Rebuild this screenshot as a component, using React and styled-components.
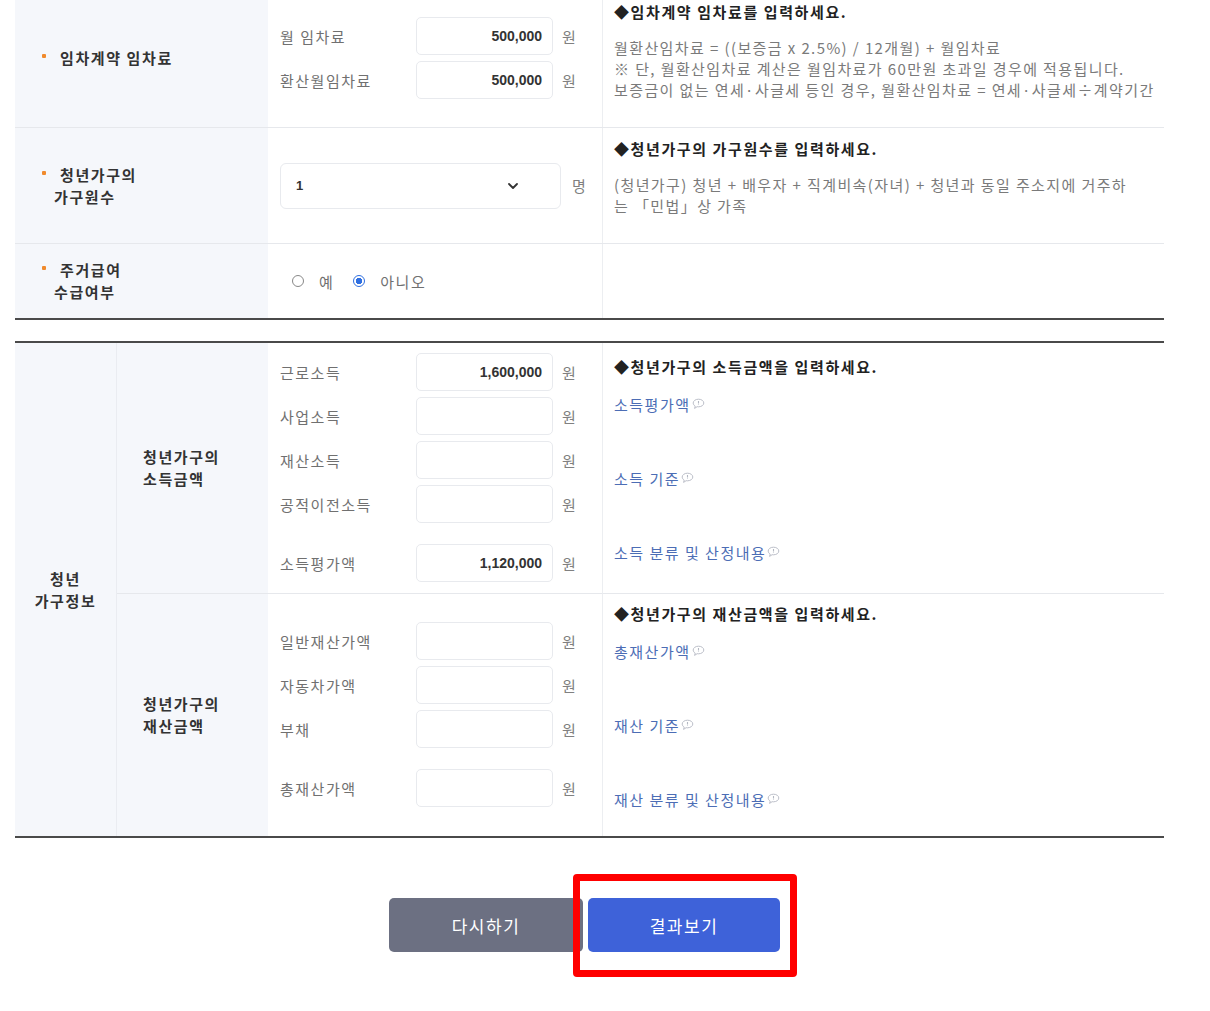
import React from 'react'
import styled, { createGlobalStyle } from 'styled-components';

const GlobalStyle = createGlobalStyle`
  body {
    margin: 0;
    background: #fff;
    font-family: "Noto Sans CJK KR", "Noto Sans", sans-serif;
    color: #333;
  }
`;

const HelpIcon = () => (
  <svg width="13" height="12" viewBox="0 0 13 12" style={{ marginLeft: 1 }}>
    <path d="M6.5 1.2c3 0 5.3 1.7 5.3 3.8S9.5 8.8 6.5 8.8c-.5 0-1 0-1.4-.1L2.6 10.4l.6-2.3C2 7.4 1.2 6.3 1.2 5c0-2.1 2.3-3.8 5.3-3.8z" fill="#fff" stroke="#b3b7c2" strokeWidth="0.9" />
    <path d="M6.5 3v2.4M6.5 6.2v.6" stroke="#b3b7c2" strokeWidth="1.1" />
  </svg>
);

const Chevron = () => (
  <svg width="14" height="14" viewBox="0 0 14 14">
    <path d="M3 5l4 4 4-4" fill="none" stroke="#333" strokeWidth="1.8" strokeLinecap="round" strokeLinejoin="round" />
  </svg>
);

const Field = ({ label, value }) => (
  <FieldRow>
    <FieldLabel>{label}</FieldLabel>
    <NumberBox>{value}</NumberBox>
    <Unit>원</Unit>
  </FieldRow>
);

const App = () => {
  return (
    <Page>
      <GlobalStyle />
      <Table top>
        <Row h="140px">
          <HeadCell><Label>임차계약 임차료</Label></HeadCell>
          <InputCell pad="29px 0 0">
            <Field label="월 임차료" value="500,000" />
            <Field label="환산월임차료" value="500,000" />
          </InputCell>
          <DescCell pad="14px">
            <DescTitle>◆임차계약 임차료를 입력하세요.</DescTitle>
            <DescText>
              월환산임차료 = ((보증금 x 2.5%) / 12개월) + 월임차료<br />
              ※ 단, 월환산임차료 계산은 월임차료가 60만원 초과일 경우에 적용됩니다.<br />
              보증금이 없는 연세·사글세 등인 경우, 월환산임차료 = 연세·사글세÷계약기간
            </DescText>
          </DescCell>
        </Row>
        <Row h="116px">
          <HeadCell><Label>청년가구의<br />가구원수</Label></HeadCell>
          <InputCell center>
            <SelectRow>
              <SelectBox>
                <span>1</span>
                <Chevron />
              </SelectBox>
              <Unit>명</Unit>
            </SelectRow>
          </InputCell>
          <DescCell pad="11px">
            <DescTitle>◆청년가구의 가구원수를 입력하세요.</DescTitle>
            <DescText>
              (청년가구) 청년 + 배우자 + 직계비속(자녀) + 청년과 동일 주소지에 거주하<br />
              는 「민법」상 가족
            </DescText>
          </DescCell>
        </Row>
        <Row h="74px" last>
          <HeadCell><Label>주거급여<br />수급여부</Label></HeadCell>
          <InputCell center>
            <RadioGroup>
              <RadioItem><Radio /> 예</RadioItem>
              <RadioItem><Radio checked /> 아니오</RadioItem>
            </RadioGroup>
          </InputCell>
          <DescCell />
        </Row>
      </Table>

      <Table>
        <InfoGrid>
          <GroupHead>청년<br />가구정보</GroupHead>
          <SubHead>청년가구의<br />소득금액</SubHead>
          <InputCell pad="10px 0 0">
            <Field label="근로소득" value="1,600,000" />
            <Field label="사업소득" value="" />
            <Field label="재산소득" value="" />
            <Field label="공적이전소득" value="" />
            <Spacer />
            <Field label="소득평가액" value="1,120,000" />
          </InputCell>
          <DescCell pad="14px">
            <DescTitle>◆청년가구의 소득금액을 입력하세요.</DescTitle>
            <LinkList>
              <HelpLink>소득평가액<HelpIcon /></HelpLink>
              <HelpLink>소득 기준<HelpIcon /></HelpLink>
              <HelpLink>소득 분류 및 산정내용<HelpIcon /></HelpLink>
            </LinkList>
          </DescCell>

          <SubHead divided>청년가구의<br />재산금액</SubHead>
          <InputCell divided pad="28px 0 0">
            <Field label="일반재산가액" value="" />
            <Field label="자동차가액" value="" />
            <Field label="부채" value="" />
            <Spacer />
            <Field label="총재산가액" value="" />
          </InputCell>
          <DescCell divided pad="10px">
            <DescTitle>◆청년가구의 재산금액을 입력하세요.</DescTitle>
            <LinkList>
              <HelpLink>총재산가액<HelpIcon /></HelpLink>
              <HelpLink>재산 기준<HelpIcon /></HelpLink>
              <HelpLink>재산 분류 및 산정내용<HelpIcon /></HelpLink>
            </LinkList>
          </DescCell>
        </InfoGrid>
      </Table>

      <Buttons>
        <ResetButton>다시하기</ResetButton>
        <Highlight>
          <SubmitButton>결과보기</SubmitButton>
        </Highlight>
      </Buttons>
    </Page>
  )
};

const Page = styled.div`
  width: 1149px;
  margin: -12px 0 0 15px;
  padding-bottom: 40px;
`;

const Table = styled.div`
  border-bottom: 2px solid #4a4a4a;
  border-top: ${p => p.top ? 'none' : '2px solid #4a4a4a'};
  margin-bottom: ${p => p.top ? '21px' : '0'};
`;

const Row = styled.div`
  display: grid;
  grid-template-columns: 253px 335px 1fr;
  height: ${p => p.h};
  box-sizing: border-box;
  border-bottom: ${p => p.last ? 'none' : '1px solid #e6e8ec'};
`;

const HeadCell = styled.div`
  background: #f5f7fb;
  display: flex;
  align-items: center;
`;

const Label = styled.div`
  position: relative;
  padding-left: 39px;
  font-size: 15px;
  font-weight: 700;
  line-height: 22px;
  letter-spacing: 1.6px;
  color: #333;
  text-indent: 6px;

  &::before {
    content: '';
    position: absolute;
    left: 27px;
    top: 7px;
    width: 4px;
    height: 4px;
    border-radius: 1px;
    background: #f08a2c;
  }
`;

const InputCell = styled.div`
  padding: ${p => p.pad || '0'};
  padding-left: 12px;
  display: flex;
  flex-direction: column;
  justify-content: ${p => p.center ? 'center' : 'flex-start'};
  gap: 6px;
  border-right: 1px solid #eceef1;
  border-top: ${p => p.divided ? '1px solid #e6e8ec' : 'none'};
`;

const FieldRow = styled.div`
  display: grid;
  grid-template-columns: 127px 137px auto;
  align-items: center;
  column-gap: 9px;
`;

const FieldLabel = styled.span`
  font-size: 15px;
  letter-spacing: 1.5px;
  color: #707070;
`;

const NumberBox = styled.div`
  height: 38px;
  box-sizing: border-box;
  border: 1px solid #e8eaee;
  border-radius: 5px;
  background: #fff;
  display: flex;
  align-items: center;
  justify-content: flex-end;
  padding-right: 10px;
  font-family: "Liberation Sans", Arial, sans-serif;
  font-size: 14px;
  font-weight: 700;
  color: #333;
`;

const Unit = styled.span`
  font-size: 15px;
  color: #808080;
`;

const Spacer = styled.div`
  height: 9px;
`;

const SelectRow = styled.div`
  display: flex;
  align-items: center;
  gap: 11px;
`;

const SelectBox = styled.div`
  width: 281px;
  height: 46px;
  box-sizing: border-box;
  border: 1px solid #e8eaee;
  border-radius: 6px;
  display: flex;
  align-items: center;
  justify-content: space-between;
  padding: 0 40px 0 15px;
  font-family: "Liberation Sans", Arial, sans-serif;
  font-size: 13px;
  font-weight: 700;
  color: #333;
`;

const RadioGroup = styled.div`
  display: flex;
  align-items: center;
  gap: 19px;
  padding-left: 12px;
`;

const RadioItem = styled.label`
  display: flex;
  align-items: center;
  gap: 15px;
  font-size: 15px;
  letter-spacing: 1.5px;
  color: #707070;
`;

const Radio = styled.span`
  width: 12px;
  height: 12px;
  box-sizing: border-box;
  border-radius: 50%;
  border: 1px solid ${p => p.checked ? '#2f6fe0' : '#888'};
  background: ${p => p.checked ? 'radial-gradient(circle, #2f6fe0 0 3px, #fff 3.5px)' : '#fff'};
`;

const DescCell = styled.div`
  padding: ${p => p.pad || '0'} 11px 0;
  border-top: ${p => p.divided ? '1px solid #e6e8ec' : 'none'};
`;

const DescTitle = styled.div`
  font-size: 15px;
  font-weight: 700;
  line-height: 20px;
  letter-spacing: 1.6px;
  color: #222;
`;

const DescText = styled.p`
  margin: 15px 0 0;
  font-size: 15px;
  line-height: 21px;
  letter-spacing: 1.4px;
  white-space: nowrap;
  color: #7a7a7a;
`;

const LinkList = styled.div`
  display: flex;
  flex-direction: column;
  gap: 54px;
  margin-top: 17px;
`;

const HelpLink = styled.a`
  display: flex;
  align-items: center;
  height: 20px;
  font-size: 15px;
  letter-spacing: 1.5px;
  color: #4c6db5;
  cursor: pointer;
`;

const InfoGrid = styled.div`
  display: grid;
  grid-template-columns: 102px 151px 335px 1fr;
  grid-template-rows: 250px 243px;
`;

const GroupHead = styled.div`
  grid-row: 1 / span 2;
  background: #f5f7fb;
  border-right: 1px solid #eaecf1;
  display: flex;
  align-items: center;
  justify-content: center;
  text-align: center;
  font-size: 15px;
  font-weight: 700;
  line-height: 22px;
  letter-spacing: 1.6px;
  color: #333;
`;

const SubHead = styled.div`
  background: #f5f7fb;
  display: flex;
  align-items: center;
  padding-left: 26px;
  font-size: 15px;
  font-weight: 700;
  line-height: 22px;
  letter-spacing: 1.6px;
  color: #333;
  border-top: ${p => p.divided ? '1px solid #e6e8ec' : 'none'};
`;

const Buttons = styled.div`
  display: flex;
  justify-content: center;
  gap: 5px;
  margin-top: 60px;
  padding-right: 10px;
`;

const BaseButton = styled.button`
  height: 54px;
  border: none;
  border-radius: 5px;
  font-family: "Noto Sans CJK KR", sans-serif;
  font-size: 17px;
  letter-spacing: 1.5px;
  color: #fff;
  cursor: pointer;
`;

const ResetButton = styled(BaseButton)`
  width: 194px;
  background: #6c7082;
`;

const SubmitButton = styled(BaseButton)`
  width: 192px;
  background: #3e62d9;
  display: block;
`;

const Highlight = styled.span`
  position: relative;
  display: block;

  &::after {
    content: '';
    position: absolute;
    inset: -24px -17px -25px -15px;
    border: 7px solid #f00;
    border-radius: 4px;
    pointer-events: none;
  }
`;

export default App;
